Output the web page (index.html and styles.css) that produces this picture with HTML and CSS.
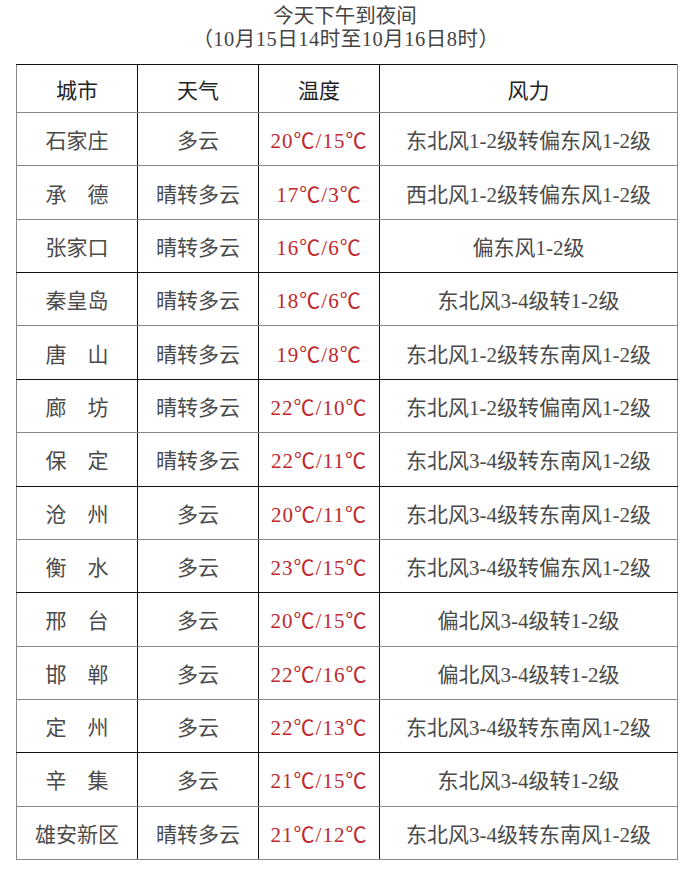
FILE: index.html
```html
<!DOCTYPE html>
<html lang="zh">
<head>
<meta charset="utf-8">
<link rel="stylesheet" href="styles.css">
</head>
<body>
<div class="page">
  <div class="title">
    <div class="t1">今天下午到夜间</div>
    <div class="t2">（10月15日14时至10月16日8时）</div>
  </div>
  <table class="wx">
    <colgroup><col class="c1"><col class="c2"><col class="c3"><col class="c4"></colgroup>
    <thead>
      <tr class="hd"><th>城市</th><th>天气</th><th>温度</th><th>风力</th></tr>
    </thead>
    <tbody>
      <tr class="g"><td>石家庄</td><td>多云</td><td class="t">20℃/15℃</td><td>东北风1-2级转偏东风1-2级</td></tr>
      <tr class="g"><td>承　德</td><td>晴转多云</td><td class="t">17℃/3℃</td><td>西北风1-2级转偏东风1-2级</td></tr>
      <tr class="b"><td>张家口</td><td>晴转多云</td><td class="t">16℃/6℃</td><td>偏东风1-2级</td></tr>
      <tr class="g"><td>秦皇岛</td><td>晴转多云</td><td class="t">18℃/6℃</td><td>东北风3-4级转1-2级</td></tr>
      <tr class="b"><td>唐　山</td><td>晴转多云</td><td class="t">19℃/8℃</td><td>东北风1-2级转东南风1-2级</td></tr>
      <tr class="g"><td>廊　坊</td><td>晴转多云</td><td class="t">22℃/10℃</td><td>东北风1-2级转偏南风1-2级</td></tr>
      <tr class="b"><td>保　定</td><td>晴转多云</td><td class="t">22℃/11℃</td><td>东北风3-4级转东南风1-2级</td></tr>
      <tr class="g"><td>沧　州</td><td>多云</td><td class="t">20℃/11℃</td><td>东北风3-4级转东南风1-2级</td></tr>
      <tr class="b"><td>衡　水</td><td>多云</td><td class="t">23℃/15℃</td><td>东北风3-4级转偏东风1-2级</td></tr>
      <tr class="g"><td>邢　台</td><td>多云</td><td class="t">20℃/15℃</td><td>偏北风3-4级转1-2级</td></tr>
      <tr class="g"><td>邯　郸</td><td>多云</td><td class="t">22℃/16℃</td><td>偏北风3-4级转1-2级</td></tr>
      <tr class="b"><td>定　州</td><td>多云</td><td class="t">22℃/13℃</td><td>东北风3-4级转东南风1-2级</td></tr>
      <tr class="g"><td>辛　集</td><td>多云</td><td class="t">21℃/15℃</td><td>东北风3-4级转1-2级</td></tr>
      <tr class="b"><td>雄安新区</td><td>晴转多云</td><td class="t">21℃/12℃</td><td>东北风3-4级转东南风1-2级</td></tr>
    </tbody>
  </table>
</div>
</body>
</html>
```

FILE: styles.css
```css
html, body {
  margin: 0;
  padding: 0;
  background: #ffffff;
}

.page {
  width: 690px;
  height: 892px;
  font-family: "Liberation Serif", "Noto Sans CJK SC", serif;
  color: #3a3a3a;
}

.title {
  padding-top: 5px;
  text-align: center;
  font-size: 20.5px;
  line-height: 23px;
  color: #444;
  height: 64px;
  box-sizing: border-box;
}

.title .t2 {
  padding-left: 2px;
  letter-spacing: 0.5px;
}

.wx {
  margin-left: 16px;
  width: 661px;
  border-collapse: collapse;
  table-layout: fixed;
  font-size: 21px;
}

.c1, .c2, .c3 { width: 121px; }
.c4 { width: 298px; }

.wx th, .wx td {
  text-align: center;
  vertical-align: middle;
  padding: 0;
  border-left: 1px solid #111;
  border-right: 1px solid #111;
  font-weight: normal;
  white-space: nowrap;
}

.wx th:first-child, .wx td:first-child { border-left: 1px solid #888; }
.wx th:last-child, .wx td:last-child { border-right: 1px solid #888; }

.wx th {
  height: 47px;
  color: #222;
  border-top: 1px solid #111;
  border-bottom: 1px solid #888;
}

.wx td {
  height: 52.36px;
  color: #4a4a4a;
}

.wx tr.g td { border-bottom: 1px solid #888; }
.wx tr.b td { border-bottom: 1px solid #111; }
.wx tbody tr:last-child td { border-bottom: 1px solid #888; }

.wx td.t {
  color: #c0282d;
  letter-spacing: 1px;
}
```
